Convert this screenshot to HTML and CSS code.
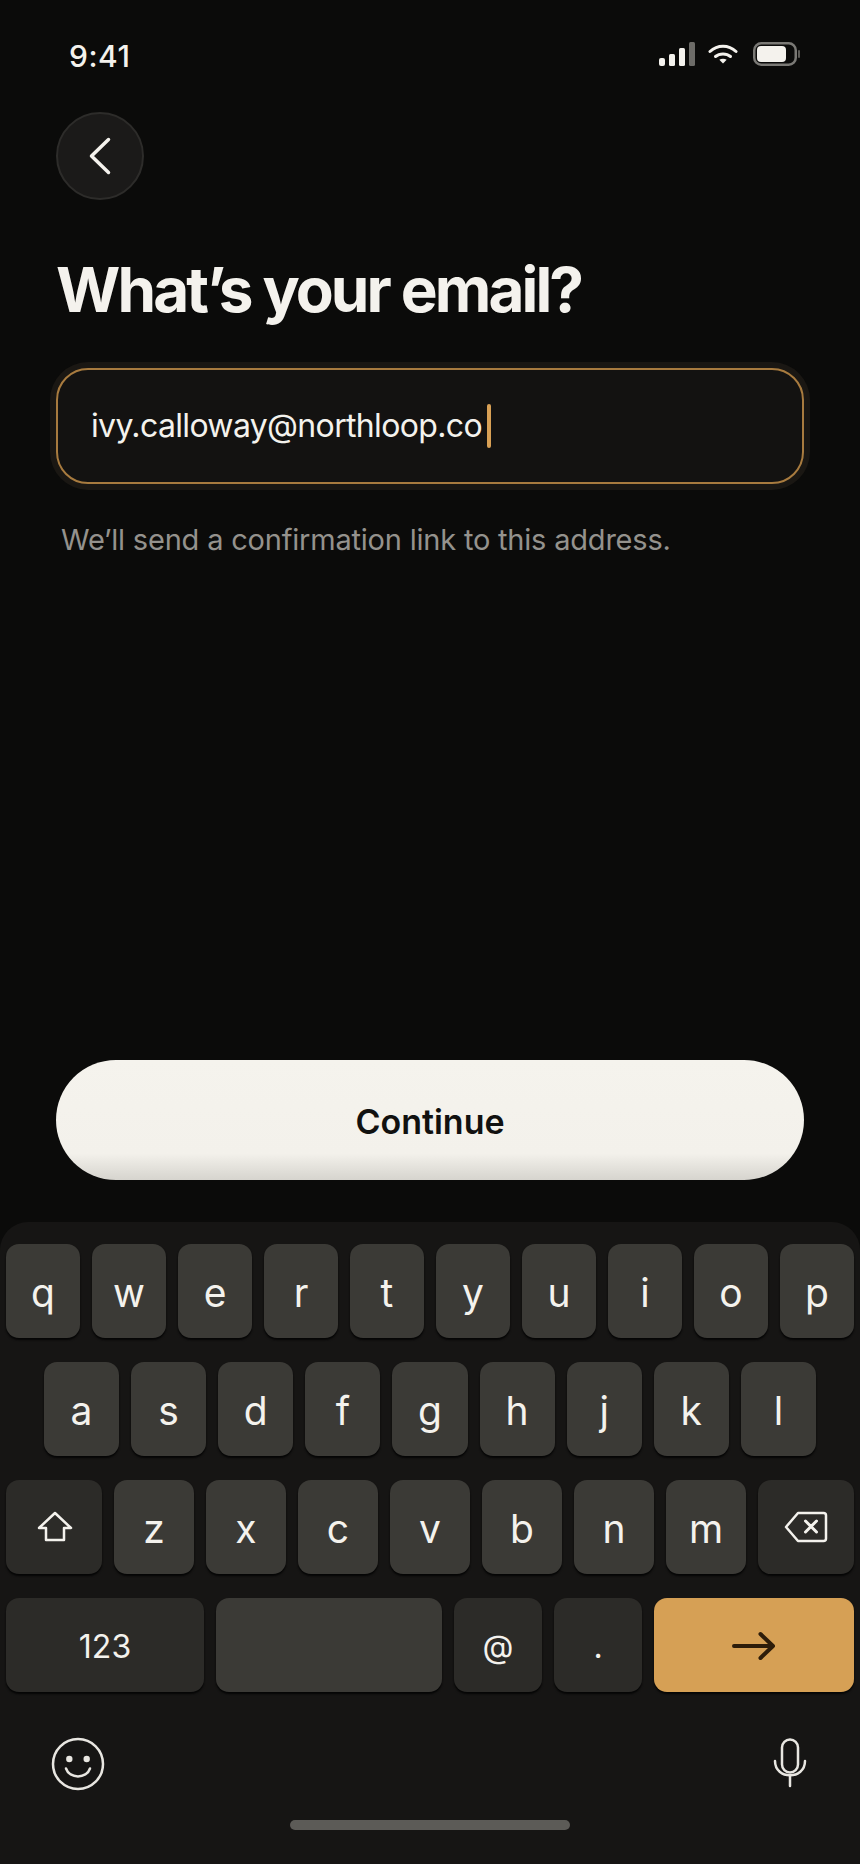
FILE: index.html
```html
<!DOCTYPE html>
<html lang="en">
<head>
  <meta charset="UTF-8" />
  <meta name="viewport" content="width=device-width, initial-scale=1.0"/>
  <title>What's your email?</title>
  <link rel="stylesheet" href="styles.css">
</head>
<body>
  <div class="screen">

    <div class="status-bar">
      <span class="time">9:41</span>
      <div class="status-icons">
        <svg class="signal" width="36" height="24" viewBox="0 0 36 24">
          <rect x="0" y="16" width="6" height="8" rx="2" fill="#f4f2ed"/>
          <rect x="10" y="12" width="6" height="12" rx="1.5" fill="#f4f2ed"/>
          <rect x="20" y="6" width="6" height="18" rx="1.5" fill="#f4f2ed"/>
          <rect x="30" y="0" width="6" height="24" rx="1.5" fill="#6d6c68"/>
        </svg>
        <svg class="wifi" width="30" height="20" viewBox="0 0 30 20" fill="none" stroke="#f4f2ed" stroke-width="3" stroke-linecap="round">
          <path d="M2 7.500C9.500 0.500 20.500 0.500 28 7.500"/>
          <path d="M7.500 12.500C11.500 9 18.500 9 22.500 12.500"/>
          <path d="M15 19.500L11.300 15.800C13.500 14.300 16.500 14.300 18.700 15.800Z" fill="#f4f2ed" stroke="none"/>
        </svg>
        <svg class="battery" width="47" height="24" viewBox="0 0 47 24">
          <rect x="1.250" y="1.250" width="41.500" height="21.500" rx="7" fill="none" stroke="#7a7975" stroke-width="2.500"/>
          <rect x="4" y="4" width="29" height="16" rx="4" fill="#f4f2ed"/>
          <rect x="45" y="8" width="2" height="8" rx="1" fill="#5c5b57"/>
        </svg>
      </div>
    </div>

    <div class="content">
      <button class="back-btn" aria-label="Back">
        <svg width="24" height="40" viewBox="0 0 24 40" fill="none" stroke="#f4f2ed" stroke-width="3.500" stroke-linecap="round" stroke-linejoin="round">
          <path d="M20.500 3.500L3.500 20L20.500 36.500"/>
        </svg>
      </button>

      <h1 class="title">What’s your email?</h1>

      <div class="email-field">
        <span class="email-value">ivy.calloway@northloop.co</span>
        <span class="caret"></span>
      </div>

      <p class="helper">We’ll send a confirmation link to this address.</p>
    </div>

    <button class="continue-btn">Continue</button>

    <div class="keyboard">
      <div class="key-row">
        <div class="key">q</div>
        <div class="key">w</div>
        <div class="key">e</div>
        <div class="key">r</div>
        <div class="key">t</div>
        <div class="key">y</div>
        <div class="key">u</div>
        <div class="key">i</div>
        <div class="key">o</div>
        <div class="key">p</div>
      </div>
      <div class="key-row row-home">
        <div class="key">a</div>
        <div class="key">s</div>
        <div class="key">d</div>
        <div class="key">f</div>
        <div class="key">g</div>
        <div class="key">h</div>
        <div class="key">j</div>
        <div class="key">k</div>
        <div class="key">l</div>
      </div>
      <div class="key-row row-shift">
        <div class="key key-fn key-wide">
          <svg width="38" height="31" viewBox="0 0 38 31" fill="none" stroke="#f4f2ed" stroke-width="2.500" stroke-linejoin="round">
            <path d="M20 2L36 17H29V29H11V17H4Z"/>
          </svg>
        </div>
        <div class="key">z</div>
        <div class="key">x</div>
        <div class="key">c</div>
        <div class="key">v</div>
        <div class="key">b</div>
        <div class="key">n</div>
        <div class="key">m</div>
        <div class="key key-fn key-wide">
          <svg width="44" height="32" viewBox="0 0 44 32" fill="none" stroke="#f4f2ed" stroke-width="2.500" stroke-linejoin="round" stroke-linecap="round">
            <path d="M14 2H39.500C41 2 42 3 42 4.500V27.500C42 29 41 30 39.500 30H14L2 16Z"/>
            <path d="M21.500 10L32.500 21M32.500 10L21.500 21" stroke-width="3"/>
          </svg>
        </div>
      </div>
      <div class="key-row row-bottom">
        <div class="key key-fn key-small key-123">123</div>
        <div class="key key-space"></div>
        <div class="key key-fn key-small key-at">@</div>
        <div class="key key-fn key-small key-at">.</div>
        <div class="key key-return">
          <svg width="44" height="32" viewBox="0 0 44 32" fill="none" stroke="#2e1d0a" stroke-width="4" stroke-linecap="round" stroke-linejoin="round">
            <path d="M2 16H41M28.500 4L41 16L28.500 28"/>
          </svg>
        </div>
      </div>

      <div class="keyboard-tools">
        <svg width="54" height="54" viewBox="0 0 54 54" fill="none" stroke="#e8e6e1" stroke-width="2.500" stroke-linecap="round">
          <circle cx="27" cy="27" r="25"/>
          <circle cx="18.300" cy="22" r="3.200" fill="#e8e6e1" stroke="none"/>
          <circle cx="35.700" cy="22" r="3.200" fill="#e8e6e1" stroke="none"/>
          <path d="M15 31.500C18.500 42 35.500 42 39 31.500"/>
        </svg>
        <svg class="mic" width="34" height="50" viewBox="0 0 34 50" fill="none" stroke="#e8e6e1" stroke-width="2.500" stroke-linecap="round">
          <rect x="9" y="1.500" width="16" height="33" rx="8"/>
          <path d="M2 23C2 42 32 42 32 23"/>
          <path d="M17 38V48"/>
        </svg>
      </div>

      <div class="home-bar"></div>
    </div>

  </div>
</body>
</html>
```

FILE: styles.css
```css
* {
  box-sizing: border-box;
}
body {
  margin: 0;
  padding: 0;
  background-color: #0b0b0a;
  color: #f4f2ed;
  font-family: 'Inter', 'Liberation Sans', sans-serif;
}
.screen {
  width: 860px;
  height: 1864px;
  display: flex;
  flex-direction: column;
  overflow: hidden;
}

/* status bar */
.status-bar {
  display: flex;
  justify-content: space-between;
  align-items: center;
  height: 24px;
  margin-top: 42px;
  padding: 0 60px 0 69px;
}
.time {
  padding-top: 4px;
  font-size: 30px;
  font-weight: 500;
  letter-spacing: 0.500px;
  line-height: 24px;
}
.status-icons {
  display: flex;
  align-items: center;
}
.wifi {
  margin-left: 13px;
}
.battery {
  margin-left: 15px;
}

/* top part */
.content {
  padding: 46px 56px 0;
}
.back-btn {
  width: 88px;
  height: 88px;
  display: flex;
  align-items: center;
  justify-content: center;
  padding: 0 1px 0 0;
  background-color: #1b1a19;
  border: 2px solid #2d2c2a;
  border-radius: 50%;
}
.title {
  margin: 52px 0 0;
  font-size: 62px;
  font-weight: 700;
  line-height: 75px;
  letter-spacing: -2.900px;
  color: #f4f2ed;
}
.email-field {
  display: flex;
  align-items: center;
  height: 116px;
  margin-top: 41px;
  padding-left: 33px;
  background-color: #131211;
  border: 2px solid #a87b3f;
  border-radius: 32px;
  box-shadow: 0 0 0 6px #1a1713;
}
.email-value {
  font-size: 32px;
  line-height: 44px;
  letter-spacing: -0.650px;
  color: #f4f2ed;
}
.caret {
  width: 4px;
  height: 44px;
  margin-left: 5px;
  border-radius: 2px;
  background-color: #d8a055;
}
.helper {
  margin: 36px 0 0 5px;
  font-size: 29px;
  line-height: 40px;
  letter-spacing: -0.200px;
  color: #94928d;
}

/* continue */
.continue-btn {
  display: block;
  width: 748px;
  height: 120px;
  margin: auto 0 0 56px;
  padding: 2px 0 0;
  border: none;
  border-radius: 60px;
  background: linear-gradient(to bottom, #f5f3ed 0%, #f3f1eb 78%, #d6d4ce 100%);
  font-family: inherit;
  font-size: 34px;
  font-weight: 600;
  color: #111110;
}

/* keyboard */
.keyboard {
  height: 642px;
  margin-top: 42px;
  padding: 22px 6px 0;
  background-color: #161514;
  border-radius: 28px 28px 0 0;
}
.key-row {
  display: flex;
  gap: 12px;
  margin-bottom: 24px;
}
.row-home {
  padding: 0 38px;
}
.key {
  flex: 1 1 0;
  height: 94px;
  display: flex;
  align-items: center;
  justify-content: center;
  padding-top: 2px;
  background-color: #3b3a36;
  border-radius: 13px;
  box-shadow: 0 2px 2px #050505;
  font-size: 39px;
  color: #f4f2ed;
}
.key-fn {
  background-color: #2c2b28;
}
.key-wide {
  flex: 0 0 96px;
  padding-top: 0;
  padding-bottom: 1px;
}
.key-small {
  font-size: 32px;
}
.key-123 {
  flex: 0 0 198px;
}
.key-at {
  flex: 0 0 88px;
}
.key-space {
  flex: 0 0 226px;
}
.key-return {
  flex: 0 0 200px;
  background-color: #d6a055;
}
.keyboard-tools {
  display: flex;
  justify-content: space-between;
  align-items: center;
  margin-top: 45px;
  padding: 0 0 0 45px;
}
.mic {
  margin: 0 47px 2px 0;
}
.home-bar {
  width: 280px;
  height: 10px;
  margin: 29px auto 0;
  border-radius: 5px;
  background-color: #5c5b57;
}
```
